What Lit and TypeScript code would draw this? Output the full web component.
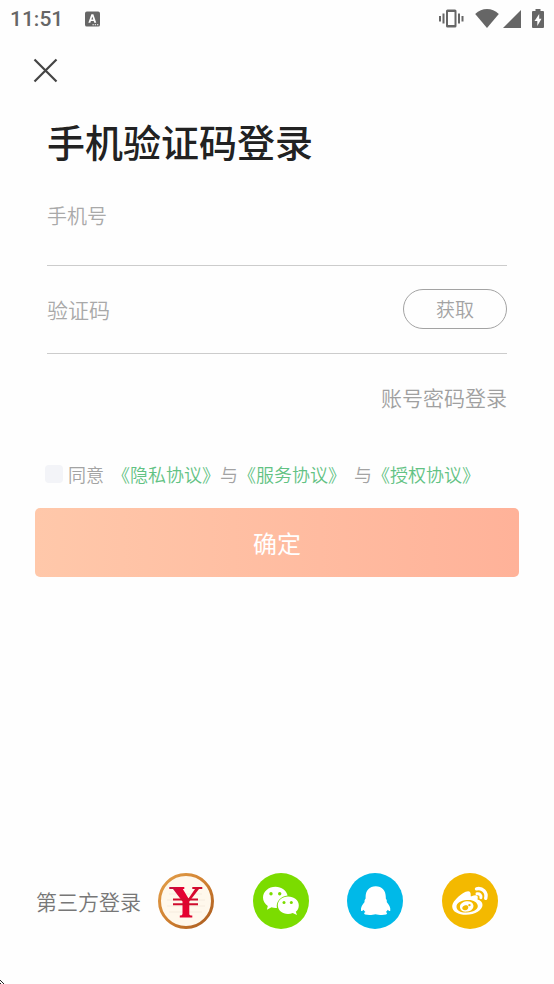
import { LitElement, html, css, svg } from "lit";
import { customElement, state } from "lit/decorators.js";

@customElement("status-bar")
class StatusBar extends LitElement {
  static styles = css`
    :host { display: flex; align-items: center; justify-content: space-between; height: 38px; padding: 0 10px; color: #666; }
    .group { display: flex; align-items: center; }
    .time { font: 500 21px/26px Roboto, sans-serif; margin-right: 22px; }
    svg { display: block; fill: currentColor; }
    .signals { gap: 11px; }
    .cells { display: flex; gap: 4px; align-items: center; }
  `;
  render() {
    return html`
      <div class="group">
        <span class="time">11:51</span>
        <svg width="15" height="16" viewBox="0 0 16 16" aria-hidden="true">
          <path fill-rule="evenodd" d="M2 0H14Q16 0 16 2V14Q16 16 14 16H2Q0 16 0 14V2Q0 0 2 0ZM6.800 3 3.600 12H5.700L6.300 10H9.300L9.900 12H12L8.900 3ZM6.800 8.400 7.800 5.200 8.800 8.400ZM8 13.600V14.600H9.400V13.600ZM10.400 13.600V14.600H11.800V13.600ZM12.800 13.600V14.600H14.200V13.600Z" />
        </svg>
      </div>
      <div class="group signals">
        <svg width="26" height="20" viewBox="0 0 26 20" aria-hidden="true">
          <path fill-rule="evenodd" d="M9.500 0.500H17Q18.500 0.500 18.500 2V17Q18.500 18.500 17 18.500H9.500Q8 18.500 8 17V2Q8 0.500 9.500 0.500ZM10 3V16H16.500V3ZM4.500 4.500H6.500V14.500H4.500ZM1 7H3V12.500H1ZM20 4.500H22V14.500H20ZM23.500 7H25.500V12.500H23.500Z" />
        </svg>
        <div class="cells">
          <svg width="24" height="20" viewBox="0 0 24 20" aria-hidden="true"><path d="M12 19 0.200 5Q5.500 0 12 0T23.800 5Z" /></svg>
          <svg width="18" height="20" viewBox="0 0 18 20" aria-hidden="true"><path d="M18 1V19H0Z" /></svg>
        </div>
        <svg width="12" height="20" viewBox="0 0 12 20" aria-hidden="true">
          <path fill-rule="evenodd" d="M3.500 0H8.500V2H11Q12 2 12 3V18Q12 19 11 19H1Q0 19 0 18V3Q0 2 1 2H3.500ZM7.200 5 2.500 12H5.300V17L9.500 9.800H7.200Z" />
        </svg>
      </div>
    `;
  }
}

const providers = [
  {
    name: "钱包登录",
    icon: svg`
      <defs>
        <linearGradient id="rim" x1="0" y1="0" x2="1" y2="1"><stop offset="0" stop-color="#e3a04b" /><stop offset=".5" stop-color="#d08030" /><stop offset="1" stop-color="#a85a20" /></linearGradient>
        <linearGradient id="yen" x1="0" y1="0" x2="1" y2="0"><stop offset="0" stop-color="#c01040" /><stop offset=".45" stop-color="#e80030" /><stop offset="1" stop-color="#c8102c" /></linearGradient>
      </defs>
      <circle cx="28" cy="28" r="26.500" fill="#fff8ec" stroke="url(#rim)" stroke-width="3" />
      <path d="M11 21H44M9 27H47M9 33H47M11 39H44" stroke="#f6ecdf" />
      <path fill="url(#yen)" d="M11.300 14H26.300V16H24.800L30.500 25.500 37 16H34.300V14H44.300V16H41L31.300 28.500V41Q31.300 42.500 34.300 42.500V44.500H21.800V42.500Q24.500 42.500 24.500 41V28.500L15 16H11.300Z" />
      <path fill="#d00c2e" d="M15 25.500H40V27.500H15ZM15 30.200H40V32.200H15Z" />`,
  },
  {
    name: "微信登录",
    icon: svg`
      <circle cx="28" cy="28" r="28" fill="#7bdc00" />
      <path fill="#fff" d="M22.500 13.700C15.500 13.700 10 18.500 10 24.500 10 28 11.900 31.100 14.800 33L13.900 36.700 18.500 34.300C20.300 34.900 22 35 23.900 34.900 22.800 28.500 28 23 34.600 22.600 33.500 17.500 28.500 13.700 22.500 13.700Z" />
      <path fill="#fff" d="M35 23.500C29.300 23.500 24.800 27.300 24.800 32.200S29.300 41 35 41C36.700 41 38.300 40.700 39.700 40.100L44 42 42.800 38.700C44.800 37.200 45.800 34.900 45.800 32.200 45.800 27.300 41 23.500 35 23.500Z" />
      <g fill="#7bdc00"><circle cx="18" cy="20.700" r="1.700" /><circle cx="26.700" cy="20.700" r="1.700" /><circle cx="31" cy="29.500" r="1.500" /><circle cx="38.300" cy="29.500" r="1.500" /></g>`,
  },
  {
    name: "QQ登录",
    icon: svg`
      <circle cx="28" cy="28" r="28" fill="#00b9e8" />
      <path fill="#fff" d="M28.700 13.300C22.500 13.300 18.600 17.600 18.600 24V25.500C17.600 26.700 17.300 28 17.600 29 15.500 31.500 13.500 34.500 14 37.400 14.300 38.600 15.500 37.900 16.500 36.700 17 37.600 17.600 38.400 18.500 39.100 16.800 39.700 16.700 41 18.200 41.600 21.500 42.500 26 42 28.500 41.300 31 42 36 42.500 39 41.600 40.500 41 40.300 39.700 38.800 39.100 39.700 38.400 40.300 37.600 40.800 36.700 41.800 37.900 43 38.600 43.300 37.400 43.800 34.500 41.800 31.500 39.700 29 40.100 28 39.800 26.700 38.800 25.500V24C38.800 17.600 35 13.300 28.700 13.300Z" />`,
  },
  {
    name: "微博登录",
    icon: svg`
      <circle cx="28" cy="28" r="28" fill="#f3b900" />
      <path fill="#fff" fill-rule="evenodd" d="M35.500 26.500C36.700 22.500 34.500 21.300 29.500 23.300 29 23.500 28.500 23.300 28.700 22.700 29.200 18 26.500 16.500 20.500 20.500 15 24.200 10.200 29.500 10.200 33.500 10.200 38.700 16.500 41.800 24 41.800 33.300 41.800 40.500 36.800 40.500 32 40.500 28.800 38.500 27.500 35.500 26.500ZM24.800 27C31 26.500 35.600 29.200 35.800 33 36 36.500 31 39.200 24.900 39.500 18.700 39.800 14.700 37.500 14.500 33.900 14.300 30.300 18.500 27.400 24.800 27Z" />
      <path fill="#fff" fill-rule="evenodd" d="M24.500 28.300C20.300 28.800 17.500 31.500 18 34.700 18.500 37.800 21.700 39.200 25.500 38.600 29.300 38 31.900 35.200 31.400 32.200 30.900 29.300 28 27.900 24.500 28.300ZM22.500 32.600C24.400 31.800 26.100 32.400 26.300 33.900 26.500 35.500 25.200 37 23.300 37.200 21.500 37.400 20.200 36.400 20.300 35 20.400 33.900 21.200 33.100 22.500 32.600ZM27.500 30.900A1.200 1.200 0 1 1 27.400 33.300 1.200 1.200 0 0 1 27.500 30.900Z" />
      <g fill="none" stroke="#fff" stroke-linecap="round"><path d="M34.500 15.800C40.500 14.500 45.300 19 43.700 25.300" stroke-width="3.400" /><path d="M35 20.800C37.800 20.400 39.500 22.300 38.900 24.600" stroke-width="3" /></g>`,
  },
];

@customElement("app-root")
class AppRoot extends LitElement {
  @state() private agreed = false;

  static styles = css`
    :host { display: block; font-family: "Noto Sans CJK SC", sans-serif; font-weight: 350; color: #a0a0a0; background: #fefefe; }
    .page { position: relative; box-sizing: border-box; min-height: 100vh; display: flex; flex-direction: column; overflow: hidden; }
    button, input { font: inherit; color: inherit; margin: 0; padding: 0; border: 0; background: none; }
    button { cursor: pointer; }
    a { text-decoration: none; color: inherit; }
    svg { display: block; }
    .close { align-self: flex-start; margin: 20px 0 0 33px; }
    .form { margin: 0 47px; display: flex; flex-direction: column; }
    h1 { margin: 30px 0 0; font-size: 38px; line-height: 56px; font-weight: 500; color: #222; }
    .field { display: flex; align-items: center; box-sizing: border-box; padding-bottom: 2px; border-bottom: 1px solid #ccc; }
    .phone { height: 97px; padding-bottom: 4px; font-size: 20px; }
    .code { height: 88px; font-size: 21px; }
    .field input { flex: 1; min-width: 0; height: 32px; outline: none; color: #222; }
    .field input::placeholder { color: #a9a9a9; opacity: 1; }
    .get { width: 104px; height: 40px; box-sizing: border-box; border: 1px solid #a3a3a3; border-radius: 20px; font-size: 19px; line-height: 28px; color: #a3a3a3; }
    .switch { align-self: flex-end; margin-top: 27px; font-size: 21px; line-height: 32px; }
    .agree { display: flex; align-items: center; margin: 48px 35px 0 45px; font-size: 18px; line-height: 26px; color: #a3a3a3; white-space: pre; }
    .agree input { appearance: none; width: 18px; height: 18px; margin-right: 5px; border-radius: 4px; background: #f3f4f8; }
    .agree input:checked { background: #62c283; }
    .agree a { color: #62c283; }
    .confirm { margin: 21px 35px 0; height: 69px; border-radius: 5px; font-size: 24px; line-height: 36px; font-weight: 400; color: #fff; background: linear-gradient(90deg, #ffc8aa, #ffb299); }
    .third { display: flex; align-items: center; gap: 17px; margin: auto 56px 55px 36px; padding-top: 40px; font-size: 21px; line-height: 32px; color: #777; }
    .icons { flex: 1; display: flex; justify-content: space-between; }
    .pointer { position: absolute; left: 0; bottom: 0; }
  `;

  render() {
    return html`
      <main class="page">
        <status-bar></status-bar>
        <button class="close" aria-label="关闭">
          <svg width="25" height="25" viewBox="0 0 25 25"><path d="M1.500 1.500 23.500 23.500M23.500 1.500 1.500 23.500" stroke="#444" stroke-width="2.200" /></svg>
        </button>
        <div class="form">
          <h1>手机验证码登录</h1>
          <div class="field phone"><input type="tel" aria-label="手机号" placeholder="手机号" /></div>
          <div class="field code">
            <input type="text" inputmode="numeric" aria-label="验证码" placeholder="验证码" />
            <button class="get">获取</button>
          </div>
          <a class="switch" href="#password">账号密码登录</a>
        </div>
        <div class="agree">
          <input id="agree" type="checkbox" .checked=${this.agreed} @change=${() => (this.agreed = !this.agreed)} />
          <label for="agree">同意  </label><a href="#privacy">《隐私协议》</a><span>与</span><a href="#service">《服务协议》</a><span>  与</span><a href="#grant">《授权协议》</a>
        </div>
        <button class="confirm">确定</button>
        <footer class="third">
          <span>第三方登录</span>
          <div class="icons">
            ${providers.map((p) => html`<button aria-label=${p.name}><svg width="56" height="56" viewBox="0 0 56 56">${p.icon}</svg></button>`)}
          </div>
        </footer>
        <svg class="pointer" width="4" height="4" viewBox="0 0 4 4" aria-hidden="true"><path d="M0 0H1V1H0ZM1 1H2V2H1ZM2 2H3V3H2ZM3 3H4V4H3ZM0 3H1V4H0Z" fill="#222" /></svg>
      </main>
    `;
  }
}
